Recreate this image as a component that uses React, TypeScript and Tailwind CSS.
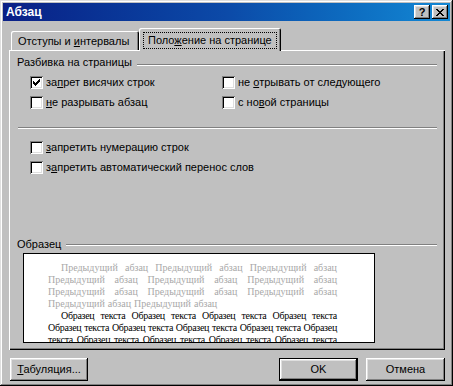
import type { ReactNode } from 'react'

const bevel =
  'shadow-[inset_-1px_-1px_#000,inset_1px_1px_#fff,inset_-2px_-2px_#808080,inset_2px_2px_#dfdfdf]'

function CheckBox({ checked, children }: { checked?: boolean; children: ReactNode }) {
  return (
    <div className="flex h-[13px] items-center gap-[3px]">
      <span className="relative h-[13px] w-[13px] shrink-0 bg-white shadow-[inset_1px_1px_#808080,inset_-1px_-1px_#fff,inset_2px_2px_#000,inset_-2px_-2px_#dfdfdf]">
        {checked && (
          <svg className="absolute left-[3px] top-[3px]" width="7" height="7" viewBox="0 0 7 7" shapeRendering="crispEdges">
            <rect x="0" y="2" width="1" height="3" fill="#000" />
            <rect x="1" y="3" width="1" height="3" fill="#000" />
            <rect x="2" y="4" width="1" height="3" fill="#000" />
            <rect x="3" y="3" width="1" height="3" fill="#000" />
            <rect x="4" y="2" width="1" height="3" fill="#000" />
            <rect x="5" y="1" width="1" height="3" fill="#000" />
            <rect x="6" y="0" width="1" height="3" fill="#000" />
          </svg>
        )}
      </span>
      <span className="leading-[13px] whitespace-nowrap">{children}</span>
    </div>
  )
}

function GroupHeader({ label, lineGap }: { label: string; lineGap: string }) {
  return (
    <div className="flex items-start pr-[8px]">
      <span className="leading-[13px] whitespace-nowrap">{label}</span>
      <div className={`${lineGap} ml-[5px] h-0 flex-1 border-t border-b border-t-[#808080] border-b-white`} />
    </div>
  )
}

function Line({ words, indent, justify = true, color }: { words: string[]; indent?: boolean; justify?: boolean; color: string }) {
  return (
    <div
      className={`flex h-[12px] whitespace-nowrap leading-[12px] ${color} ${indent ? 'pl-[13px]' : ''} ${justify ? 'justify-between' : 'gap-[3px]'}`}
    >
      {words.map((w, i) => (
        <span key={i}>{w}</span>
      ))}
    </div>
  )
}

const prev = ['Предыдущий', 'абзац', 'Предыдущий', 'абзац', 'Предыдущий', 'абзац']
const sample4 = ['Образец', 'текста', 'Образец', 'текста', 'Образец', 'текста', 'Образец', 'текста']
const sample5 = [...sample4, 'Образец']
const sampleTail = ['текста', 'Образец', 'текста', 'Образец', 'текста', 'Образец', 'текста', 'Образец', 'текста']

export default function App() {
  return (
    <div
      className="flex h-[386px] w-[453px] flex-col bg-[#c0c0c0] p-[3px] text-[11px] text-black shadow-[inset_-1px_-1px_#000,inset_1px_1px_#dfdfdf,inset_-2px_-2px_#808080,inset_2px_2px_#fff]"
      style={{ fontFamily: '"Liberation Sans", Arial, sans-serif' }}
    >
      {/* title bar */}
      <div className="flex h-[18px] shrink-0 items-start justify-between bg-gradient-to-r from-[#0a1f86] via-[#0c4aa8] to-[#1488d4] pl-[3px] pr-[2px]">
        <span className="mt-[2px] text-[12px] font-bold leading-[14px] text-white">Абзац</span>
        <div className="mt-[2px] flex gap-[2px]">
          <div className={`flex h-[14px] w-[16px] items-center justify-center bg-[#c0c0c0] ${bevel}`}>
            <span className="text-[11px] font-bold leading-[11px]">?</span>
          </div>
          <div className={`flex h-[14px] w-[16px] items-center justify-center bg-[#c0c0c0] ${bevel}`}>
            <svg width="8" height="7" viewBox="0 0 8 7" shapeRendering="crispEdges">
              <path d="M0 0h2v1h-2zM1 1h2v1h-2zM2 2h4v1h-4zM3 3h2v1h-2zM2 4h4v1h-4zM1 5h2v1h-2zM0 6h2v1h-2zM6 0h2v1h-2zM5 1h2v1h-2zM5 5h2v1h-2zM6 6h2v1h-2z" fill="#000" />
            </svg>
          </div>
        </div>
      </div>

      {/* tabs */}
      <div className="ml-[8px] mt-[7px] flex items-end">
        <div className="flex h-[19px] w-[128px] items-center rounded-t-[2px] pl-[7px] pt-[1px] shadow-[inset_1px_1px_#fff,inset_-1px_0_#000,inset_-2px_0_#808080]">
          <span className="whitespace-nowrap">
            Отступы и <u>и</u>нтервалы
          </span>
        </div>
        <div className="relative z-10 mb-[-1px] flex h-[23px] w-[142px] items-start rounded-t-[2px] bg-[#c0c0c0] pl-[4px] pt-[4px] shadow-[inset_1px_1px_#fff,inset_-1px_0_#000,inset_-2px_0_#808080]">
          <span className="border border-dotted border-black px-[4px] leading-[15px] whitespace-nowrap">
            Поло<u>ж</u>ение на странице
          </span>
        </div>
      </div>

      {/* panel */}
      <div className="ml-[6px] flex h-[300px] w-[436px] shrink-0 flex-col pl-[8px] pt-[6px] shadow-[inset_1px_1px_#fff,inset_-1px_-1px_#000,inset_-2px_-2px_#808080]">
        <GroupHeader label="Разбивка на страницы" lineGap="mt-[8px]" />
        <div className="mt-[7px] grid grid-cols-[192px_1fr] gap-y-[7px] pl-[13px]">
          <CheckBox checked>
            за<u>п</u>рет висячих строк
          </CheckBox>
          <CheckBox>
            не <u>о</u>трывать от следующего
          </CheckBox>
          <CheckBox>
            <u>н</u>е разрывать абзац
          </CheckBox>
          <CheckBox>
            с но<u>в</u>ой страницы
          </CheckBox>
        </div>

        <div className="ml-[1px] mt-[18px] h-0 w-[419px] border-t border-b border-t-[#808080] border-b-white" />

        <div className="mt-[12px] flex flex-col gap-[7px] pl-[13px]">
          <CheckBox>
            <u>з</u>апретить нумерацию строк
          </CheckBox>
          <CheckBox>
            з<u>а</u>претить автоматический перенос слов
          </CheckBox>
        </div>

        <div className="mt-[64px]">
          <GroupHeader label="Образец" lineGap="mt-[6px]" />
        </div>

        <div
          className="ml-[6px] mt-[2px] h-[90px] w-[352px] overflow-hidden border border-black bg-white pl-[24px] pt-[8px] text-[10px]"
          style={{ fontFamily: '"Liberation Serif", "Times New Roman", serif' }}
        >
          <div className="w-[289px]">
            <Line words={prev} indent color="text-[#a8a8a8]" />
            <Line words={prev} color="text-[#a8a8a8]" />
            <Line words={prev} color="text-[#a8a8a8]" />
            <Line words={['Предыдущий', 'абзац', 'Предыдущий', 'абзац']} justify={false} color="text-[#a8a8a8]" />
            <Line words={sample4} indent color="text-black tracking-[-0.3px]" />
            <Line words={sample5} color="text-black tracking-[-0.3px]" />
            <Line words={sampleTail} color="text-black tracking-[-0.3px]" />
          </div>
        </div>
      </div>

      {/* buttons */}
      <div className="ml-[7px] mr-[5px] mt-[8px] flex items-start justify-between">
        <button type="button" className={`h-[23px] w-[78px] bg-[#c0c0c0] text-[11px] ${bevel}`}>
          <u>Т</u>абуляция...
        </button>
        <div className="flex gap-[8px]">
          <button type="button" className="h-[23px] w-[79px] border border-black bg-[#c0c0c0] text-[11px] shadow-[inset_-1px_-1px_#000,inset_1px_1px_#fff,inset_-2px_-2px_#808080,inset_2px_2px_#dfdfdf]">
            OK
          </button>
          <button type="button" className={`h-[23px] w-[79px] bg-[#c0c0c0] text-[11px] ${bevel}`}>
            Отмена
          </button>
        </div>
      </div>
    </div>
  )
}
